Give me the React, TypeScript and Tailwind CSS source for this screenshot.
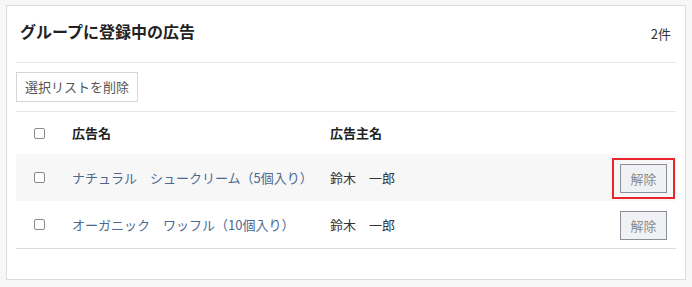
import React from "react";

const font = { fontFamily: '"Noto Sans CJK JP", "Noto Sans", sans-serif' };

function Box() {
  return <span className="block w-[11px] h-[11px] rounded-[2px] border border-[#8a8a8a] bg-white" />;
}

function Row({ name, owner, bg, marked }: { name: string; owner: string; bg: string; marked?: boolean }) {
  return (
    <div className={`flex items-center h-[47px] ${bg}`}>
      <div className="w-[56px] pl-[18px] flex items-center">
        <Box />
      </div>
      <div className="w-[258px] text-[13px] text-[#4b6890]">{name}</div>
      <div className="flex-1 text-[13px] text-[#333]">{owner}</div>
      <div className="pr-[9px] pt-[1px] flex items-center">
        <span className="relative">
          {marked && (
            <span className="absolute -left-[8px] -right-[8px] -top-[6px] -bottom-[6px] border-2 border-[#e8262b]" />
          )}
          <button className="relative block w-[47px] h-[29px] border border-[#8c9096] bg-[#eff1f4] text-[13px] text-[#8a8a8a] leading-none">
            解除
          </button>
        </span>
      </div>
    </div>
  );
}

export default function App() {
  return (
    <div className="bg-[#f7f7f7] w-[692px] h-[287px] pt-[5px] pl-[6px]" style={font}>
      <div className="w-[680px] h-[275px] bg-white border border-[#dcdcdc] px-[9px]">
        <div className="flex justify-between pt-[13px] pb-[16px] border-b border-[#e6e6e6]">
          <div className="pl-[4px] text-[16px] leading-[24px] font-bold text-[#222]">グループに登録中の広告</div>
          <div className="text-[13px] leading-[24px] text-[#333] mt-[3px] pr-[5px]">2件</div>
        </div>
        <div className="pt-[9px] pb-[9px] border-b border-[#e6e6e6]">
          <button className="h-[30px] px-[8px] border border-[#d6d6d6] bg-white text-[13px] text-[#555]">
            選択リストを削除
          </button>
        </div>
        <div className="flex items-center h-[42px]">
          <div className="w-[56px] pl-[18px] flex items-center">
            <Box />
          </div>
          <div className="w-[258px] text-[13px] font-bold text-[#222]">広告名</div>
          <div className="flex-1 text-[13px] font-bold text-[#222]">広告主名</div>
        </div>
        <div className="border-b border-[#dcdcdc]">
          <Row name="ナチュラル　シュークリーム（5個入り）" owner="鈴木　一郎" bg="bg-[#f7f7f7]" marked />
          <Row name="オーガニック　ワッフル（10個入り）" owner="鈴木　一郎" bg="bg-white" />
        </div>
      </div>
    </div>
  );
}
